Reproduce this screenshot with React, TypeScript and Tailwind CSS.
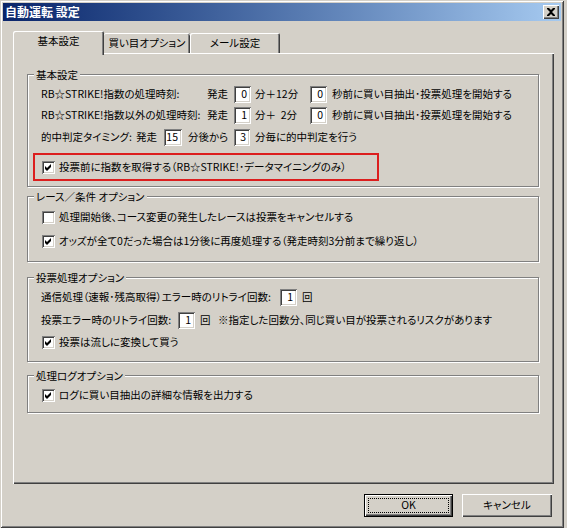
import React from "react";

const font =
  "font-['Noto_Sans_CJK_JP','Noto_Sans',sans-serif] [font-feature-settings:'palt']";

function Checkbox({ checked }: { checked: boolean }) {
  return (
    <span className="relative inline-block w-[13px] h-[13px] bg-white shrink-0 shadow-[inset_1px_1px_0_#808080,inset_-1px_-1px_0_#ffffff,inset_2px_2px_0_#404040,inset_-2px_-2px_0_#d4d0c8]">
      {checked && (
        <svg viewBox="0 0 13 13" className="absolute left-0 top-0 w-[13px] h-[13px]">
          <path d="M3 5 L5 7 L9 3 L9 6 L5 10 L3 8 Z" fill="#000" />
        </svg>
      )}
    </span>
  );
}

function NumBox({ v, w }: { v: string; w: string }) {
  return (
    <span
      className={`inline-flex items-center justify-end pr-[4px] h-[17px] bg-white shrink-0 shadow-[inset_1px_1px_0_#808080,inset_-1px_-1px_0_#ffffff,inset_2px_2px_0_#404040,inset_-2px_-2px_0_#d4d0c8] ${w}`}
    >
      {v}
    </span>
  );
}

function Group({
  label,
  className,
  children,
}: {
  label: string;
  className: string;
  children: React.ReactNode;
}) {
  return (
    <div
      className={`relative w-[512px] border border-[#808080] shadow-[1px_1px_0_#ffffff,inset_1px_1px_0_#ffffff] flex flex-col ${className}`}
    >
      <span className="absolute left-[6px] -top-[7px] bg-[#d4d0c8] px-[2px] leading-[13px] whitespace-nowrap">
        {label}
      </span>
      {children}
    </div>
  );
}

function CheckRow({
  checked,
  text,
  className,
}: {
  checked: boolean;
  text: string;
  className: string;
}) {
  return (
    <div className={`h-[18px] flex items-center gap-[4px] pl-[14px] whitespace-nowrap ${className}`}>
      <Checkbox checked={checked} />
      <span>{text}</span>
    </div>
  );
}

function CloseBtn() {
  return (
    <span className="relative w-[16px] h-[14px] bg-[#d4d0c8] shadow-[inset_1px_1px_0_#ffffff,inset_-1px_-1px_0_#404040,inset_-2px_-2px_0_#808080]">
      <svg viewBox="0 0 16 14" className="absolute left-0 top-0 w-[16px] h-[14px]">
        <path
          d="M4 3h2l2 2 2-2h2v1l-3 3 3 3v1h-2l-2-2-2 2H4v-1l3-3-3-3z"
          fill="#000"
        />
      </svg>
    </span>
  );
}

export default function App() {
  return (
    <div className={`w-[567px] h-[528px] bg-[#d4d0c8] text-black text-[10.5px] leading-none ${font}`}>
      <div className="w-[564px] h-[528px] p-[3px] flex flex-col shadow-[inset_1px_1px_0_#d4d0c8,inset_-1px_-1px_0_#404040,inset_2px_2px_0_#ffffff,inset_-2px_-2px_0_#808080]">
        {/* title bar */}
        <div className="h-[18px] shrink-0 flex items-center justify-between bg-gradient-to-r from-[#0a246a] to-[#a6caf0] pl-[2px] pr-[2px]">
          <span className="text-white font-bold text-[12px]">自動運転 設定</span>
          <CloseBtn />
        </div>

        {/* tabs */}
        <div className="mt-[10px] ml-[10px] flex items-end h-[22px] shrink-0 relative z-10 whitespace-nowrap">
          <div className="w-[91px] h-[24px] -mb-[2px] bg-[#d4d0c8] rounded-t-[2px] flex items-center justify-center pb-[3px] shadow-[inset_1px_1px_0_#ffffff,inset_-1px_0_0_#404040,inset_-2px_0_0_#808080]">
            基本設定
          </div>
          <div className="w-[86px] h-[20px] bg-[#d4d0c8] rounded-t-[2px] flex items-center justify-center shadow-[inset_0_1px_0_#ffffff,inset_-1px_0_0_#404040,inset_-2px_0_0_#808080]">
            買い目オプション
          </div>
          <div className="w-[90px] h-[20px] bg-[#d4d0c8] rounded-t-[2px] flex items-center justify-center shadow-[inset_1px_1px_0_#ffffff,inset_-1px_0_0_#404040,inset_-2px_0_0_#808080]">
            メール設定
          </div>
        </div>

        {/* pane */}
        <div className="ml-[10px] w-[541px] h-[431px] shrink-0 pt-[21px] pl-[14px] flex flex-col whitespace-nowrap shadow-[inset_1px_1px_0_#ffffff,inset_-1px_-1px_0_#404040,inset_-2px_-2px_0_#808080]">
          <Group label="基本設定" className="h-[113px] pt-[10px]">
            <div className="h-[18px] flex items-center pl-[13px]">
              <span className="w-[166px] shrink-0">RB☆STRIKE!指数の処理時刻:</span>
              <span className="w-[27px] shrink-0">発走</span>
              <NumBox v="0" w="w-[17px]" />
              <span className="w-[59px] shrink-0 pl-[4px] whitespace-pre">分＋12分</span>
              <NumBox v="0" w="w-[17px]" />
              <span className="pl-[5px]">秒前に買い目抽出･投票処理を開始する</span>
            </div>
            <div className="h-[18px] mt-[3px] flex items-center pl-[13px]">
              <span className="w-[166px] shrink-0">RB☆STRIKE!指数以外の処理時刻:</span>
              <span className="w-[27px] shrink-0">発走</span>
              <NumBox v="1" w="w-[17px]" />
              <span className="w-[59px] shrink-0 pl-[4px] whitespace-pre">分＋  2分</span>
              <NumBox v="0" w="w-[17px]" />
              <span className="pl-[5px]">秒前に買い目抽出･投票処理を開始する</span>
            </div>
            <div className="h-[18px] mt-[4px] flex items-center pl-[13px]">
              <span className="w-[95px] shrink-0">的中判定タイミング:</span>
              <span className="w-[28px] shrink-0">発走</span>
              <NumBox v="15" w="w-[18px]" />
              <span className="w-[52px] shrink-0 pl-[6px]">分後から</span>
              <NumBox v="3" w="w-[16px]" />
              <span className="pl-[5px]">分毎に的中判定を行う</span>
            </div>
            <div className="ml-[5px] mt-[7px] w-[346px] h-[28px] border-2 border-[#dc1e1e] flex items-center gap-[4px] pl-[7px]">
              <Checkbox checked />
              <span>投票前に指数を取得する（RB☆STRIKE!･データマイニングのみ）</span>
            </div>
          </Group>

          <Group label="レース／条件 オプション" className="mt-[9px] h-[66px] pt-[11px]">
            <CheckRow checked={false} text="処理開始後、コース変更の発生したレースは投票をキャンセルする" className="" />
            <CheckRow
              checked
              text="オッズが全て0だった場合は1分後に再度処理する（発走時刻3分前まで繰り返し）"
              className="mt-[6px]"
            />
          </Group>

          <Group label="投票処理オプション" className="mt-[15px] h-[85px] pt-[10px]">
            <div className="h-[18px] flex items-center pl-[13px]">
              <span className="w-[239px] shrink-0">通信処理（速報･残高取得）エラー時のリトライ回数:</span>
              <NumBox v="1" w="w-[17px]" />
              <span className="pl-[5px]">回</span>
            </div>
            <div className="h-[18px] mt-[5px] flex items-center pl-[13px]">
              <span className="w-[137px] shrink-0">投票エラー時のリトライ回数:</span>
              <NumBox v="1" w="w-[17px]" />
              <span className="w-[23px] shrink-0 pl-[5px]">回</span>
              <span>※指定した回数分、同じ買い目が投票されるリスクがあります</span>
            </div>
            <CheckRow checked text="投票は流しに変換して買う" className="mt-[4px]" />
          </Group>

          <Group label="処理ログオプション" className="mt-[13px] h-[38px] pt-[10px]">
            <CheckRow checked text="ログに買い目抽出の詳細な情報を出力する" className="" />
          </Group>
        </div>

        {/* buttons */}
        <div className="mt-[10px] flex justify-end gap-[9px] pr-[9px]">
          <div className="w-[89px] h-[23px] border border-black bg-[#d4d0c8] p-[3px] shadow-[inset_1px_1px_0_#ffffff,inset_-1px_-1px_0_#404040,inset_-2px_-2px_0_#808080]">
            <div className="w-full h-full border border-dotted border-black flex items-center justify-center">
              OK
            </div>
          </div>
          <div className="w-[90px] h-[23px] bg-[#d4d0c8] flex items-center justify-center shadow-[inset_1px_1px_0_#ffffff,inset_-1px_-1px_0_#404040,inset_-2px_-2px_0_#808080]">
            キャンセル
          </div>
        </div>
      </div>
    </div>
  );
}
